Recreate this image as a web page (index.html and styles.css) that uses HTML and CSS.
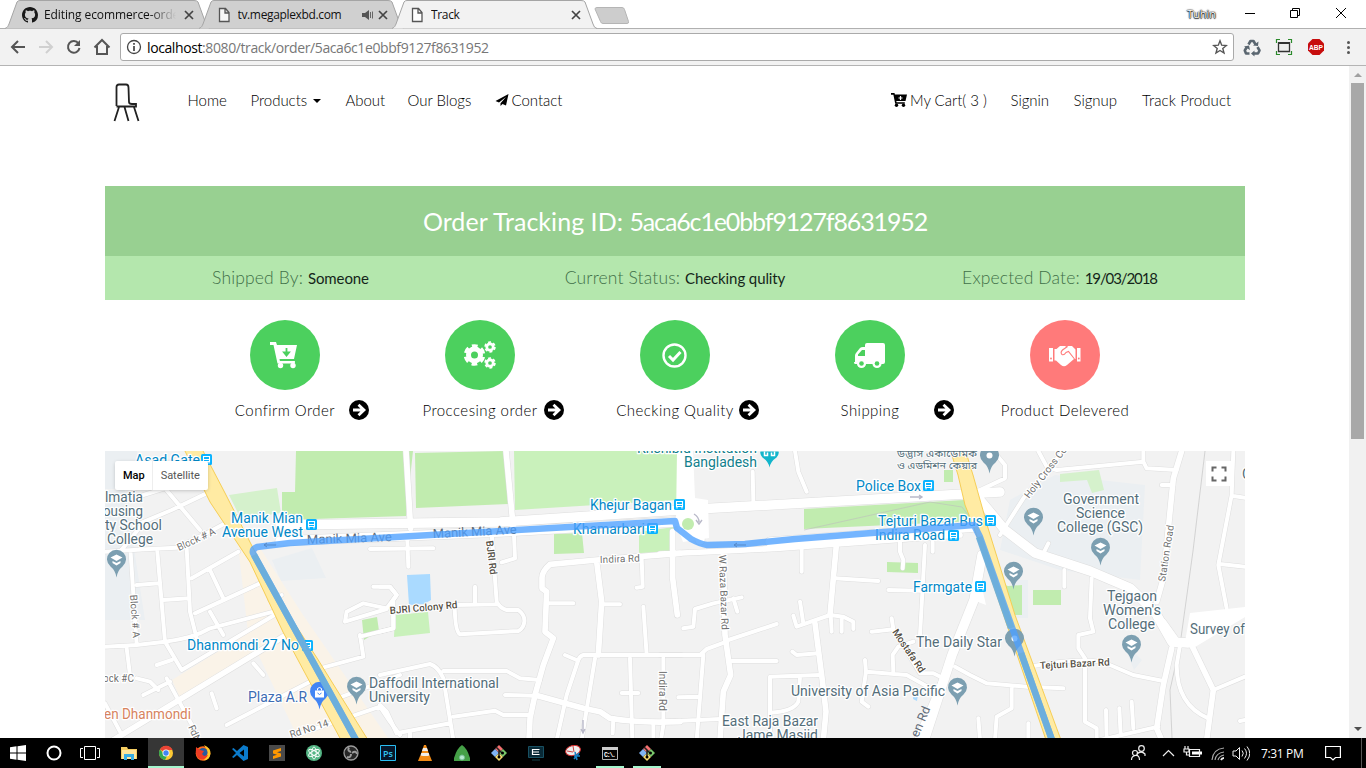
FILE: index.html
```html
<!DOCTYPE html>
<html lang="en">
<head>
<meta charset="utf-8">
<title>Track</title>
<link rel="stylesheet" href="styles.css">
</head>
<body>
<div class="screen">
<div class="tabstrip">
  <div class="tab">
    <svg class="tab-shape" viewBox="0 0 205 29"><path d="M0 28.5C3 27 3 26 4 24L12 2Q13 .5 15 .5H189Q192 .5 193 2L201 24Q202 28 205 28.5"/></svg>
    <svg class="fav" viewBox="0 0 16 16"><path fill="#181818" d="M8 0C3.58 0 0 3.58 0 8c0 3.54 2.29 6.53 5.47 7.59.4.07.55-.17.55-.38 0-.19-.01-.82-.01-1.49-2.01.37-2.53-.49-2.69-.94-.09-.23-.48-.94-.82-1.13-.28-.15-.68-.52-.01-.53.63-.01 1.08.58 1.23.82.72 1.21 1.87.87 2.33.66.07-.52.28-.87.51-1.07-1.78-.2-3.64-.89-3.64-3.95 0-.87.31-1.59.82-2.15-.08-.2-.36-1.02.08-2.12 0 0 .67-.21 2.2.82.64-.18 1.32-.27 2-.27s1.36.09 2 .27c1.53-1.04 2.2-.82 2.2-.82.44 1.1.16 1.92.08 2.12.51.56.82 1.27.82 2.15 0 3.07-1.87 3.75-3.65 3.95.29.25.54.73.54 1.48 0 1.07-.01 1.93-.01 2.2 0 .21.15.46.55.38A8.01 8.01 0 0 0 16 8c0-4.42-3.58-8-8-8z"/></svg>
    <span class="tab-title fade">Editing ecommerce-orde</span>
    <svg class="close" viewBox="0 0 10 10"><path d="M1 1l8 8M9 1L1 9"/></svg>
  </div>
  <div class="tab">
    <svg class="tab-shape" viewBox="0 0 205 29"><path d="M0 28.5C3 27 3 26 4 24L12 2Q13 .5 15 .5H189Q192 .5 193 2L201 24Q202 28 205 28.5"/></svg>
    <svg class="fav" viewBox="0 0 16 16"><path fill="#f6f6f6" stroke="#555" stroke-width="1.3" d="M3.5 1.5h6l3.500 4v9h-9.500zM9 1.500v4.500h4"/></svg>
    <span class="tab-title">tv.megaplexbd.com</span>
    <svg class="sound" viewBox="0 0 12 12"><path fill="#555" d="M0 4h3l4-3v10L3 8H0z"/><path d="M8.500 3v6M10.500 2.500v7" stroke="#666" fill="none"/></svg>
    <svg class="close" viewBox="0 0 10 10"><path d="M1 1l8 8M9 1L1 9"/></svg>
  </div>
  <div class="tab active">
    <svg class="tab-shape" viewBox="0 0 205 29"><path d="M0 28.5C3 27 3 26 4 24L12 2Q13 .5 15 .5H189Q192 .5 193 2L201 24Q202 28 205 28.5"/></svg>
    <svg class="fav" viewBox="0 0 16 16"><path fill="#fff" stroke="#555" stroke-width="1.3" d="M3.500 1.500h6l3.500 4v9h-9.500zM9 1.500v4.500h4"/></svg>
    <span class="tab-title">Track</span>
    <svg class="close" viewBox="0 0 10 10"><path d="M1 1l8 8M9 1L1 9"/></svg>
  </div>
  <svg class="newtab" viewBox="0 0 36 18"><path d="M3 .5h25q2 0 2.500 2l4 12q.5 2-1.500 2H9q-2 0-2.500-2L1 2Q1 .5 3 .5z" fill="#cdcdcd" stroke="#b5b5b5"/></svg>
  <span class="user">Tuhin</span>
  <svg class="winctl" viewBox="0 0 112 14" fill="none" stroke="#000"><path d="M2 7.500h10M47.500 4.500h7v7h-7zM49.500 4.500v-2h7v7h-2M93 2l10 10M103 2L93 12"/></svg>
</div>
<div class="toolbar">
  <svg class="navicons" viewBox="0 0 120 38" fill="none" stroke="#555" stroke-width="2"><path d="M25 19H12M18 13l-6 6 6 6"/><path stroke="#d0d0d0" d="M39 19h13M46 13l6 6-6 6"/><path d="M78.500 15.500A5.800 5.800 0 1 0 79.500 20"/><path d="M80 12v6h-6z" fill="#555" stroke="none"/><path d="M94.500 19.500L102 12l7.500 7.500M97 18v8h10v-8"/></svg>
  <div class="omnibox">
    <svg class="info" viewBox="0 0 16 16" fill="none" stroke="#444" stroke-width="1.300"><circle cx="8" cy="8" r="6.500"/><path stroke-width="1.700" d="M8 7v5M8 4v1.700"/></svg>
    <span class="url"><b>localhost</b>:8080/track/order/5aca6c1e0bbf9127f8631952</span>
    <svg class="star" viewBox="0 0 16 16"><path fill="none" stroke="#555" stroke-width="1.400" d="M8 1.800l1.700 4.400 4.700.3-3.600 3 1.200 4.500L8 11.500 4 14l1.200-4.500-3.600-3 4.700-.3z"/></svg>
  </div>
  <svg class="exts" viewBox="0 0 126 24">
    <g fill="none" stroke="#5a6670" stroke-width="2.600" stroke-linejoin="round"><path d="M8.500 9.500L10.500 6h3l2 3.500M17.500 12l2 3.500-1.500 3h-4M9.500 18.500H6l-1.200-3 2-3.500"/></g><path d="M13 10.500l5 .5.5-4.500zM14.500 15.500v6l-3.500-3zM4 11.500l5-1 1 4.500z" fill="#5a6670"/>
    <path d="M38.500 8h11v8.500h-11z" fill="#eee" stroke="#333" stroke-width="1.300"/><path d="M38 8h12" stroke="#333" stroke-width="2"/><path d="M36.500 8V4.500H40M48 4.500h3.500V8M51.500 16v3.500H48M40 19.500h-3.500V16" stroke="#2b8a2b" fill="none" stroke-width="1.200"/>
    <path d="M72.500 4h7l4.500 4.500v7L79.500 20h-7L68 15.500v-7z" fill="#c70d0d"/><text x="69" y="15" font-size="7.500" font-weight="700" textLength="14" lengthAdjust="spacingAndGlyphs" fill="#fff" font-family="Liberation Sans">ABP</text>
    <g fill="#555"><circle cx="108.500" cy="7.500" r="1.500"/><circle cx="108.500" cy="12.500" r="1.500"/><circle cx="108.500" cy="17.500" r="1.500"/></g>
  </svg>
</div>
<div class="viewport">
 <main class="page">
  <header class="site-nav">
    <svg class="logo" viewBox="0 0 30 40" fill="none" stroke="#222" stroke-width="1.800"><path d="M4.500 23V4Q4.500 1.500 7 1.500h7Q16.500 1.500 16.500 4.500l.5 14.500q0 2 3 2h4v2.500H4.500M7 24L2.500 38M12.500 24l4 14M22 24l4.500 14"/></svg>
    <nav class="links">
      <a class="l-home">Home</a><a class="l-products">Products<i class="caret"></i></a><a class="l-about">About</a><a class="l-blogs">Our Blogs</a><a class="l-contact"><svg viewBox="0 0 14 14"><path d="M13.500 1L.5 8l3.500 1.500L11 4l-5.500 6.200V13l2-2 3.500 1.500z"/></svg>Contact</a>
    </nav>
    <nav class="links right">
      <a class="l-cart"><svg viewBox="0 0 16 14"><path d="M0 0h3.500l.4 1.500H16L14.500 8H5.300l.3 1.200h8.200v1.600H4.200L2.400 1.700H0z"/><circle cx="5.500" cy="12.300" r="1.700"/><circle cx="12.500" cy="12.300" r="1.700"/><path d="M9.500 3v4M7.500 5h4" stroke="#fff" stroke-width="1.200"/></svg>My Cart( 3 )</a><a class="l-in">Signin</a><a class="l-up">Signup</a><a class="l-track">Track Product</a>
    </nav>
  </header>
  <section class="tracking">
    <h1>Order Tracking ID: <span>5aca6c1e0bbf9127f8631952</span></h1>
    <div class="facts">
      <p>Shipped By: <span>Someone</span></p><p>Current Status: <span>Checking qulity</span></p><p>Expected Date: <span class="date">19/03/2018</span></p>
    </div>
  </section>
  <section class="steps">
    <div class="step"><div class="disc"><svg viewBox="0 0 32 32"><path fill="#fff" d="M1 3h6l1 3h20l-3 14H10.500l.4 2h15v2.500H8.500L4.500 6H1z"/><circle cx="11.500" cy="26.500" r="2.700" fill="#fff"/><circle cx="24" cy="26.500" r="2.700" fill="#fff"/><path d="M17.500 9v5M15 13.500h5l-2.500 3z" stroke="#4cd05e" fill="#4cd05e" stroke-width="1.800"/></svg></div>
      <div class="label"><span>Confirm Order</span><svg class="arrow" viewBox="0 0 20 20"><circle cx="10" cy="10" r="10"/><path d="M4 10h11M9.500 4.800L15 10l-5.500 5.200"/></svg></div></div>
    <div class="step"><div class="disc"><svg viewBox="0 0 32 32" fill="none" stroke="#fff"><circle cx="10.500" cy="16" r="6" stroke-width="5"/><circle cx="10.500" cy="16" r="9.300" stroke-width="3" stroke-dasharray="5.700 4.039" stroke-dashoffset="-2"/><circle cx="26" cy="8" r="3.200" stroke-width="2.700"/><circle cx="26" cy="8" r="4.900" stroke-width="1.700" stroke-dasharray="2.900 2.231"/><circle cx="26" cy="24" r="3.200" stroke-width="2.700"/><circle cx="26" cy="24" r="4.900" stroke-width="1.700" stroke-dasharray="2.900 2.231"/></svg></div>
      <div class="label"><span>Proccesing order</span><svg class="arrow" viewBox="0 0 20 20"><circle cx="10" cy="10" r="10"/><path d="M4 10h11M9.500 4.800L15 10l-5.500 5.200"/></svg></div></div>
    <div class="step"><div class="disc"><svg viewBox="0 0 32 32" fill="none" stroke="#fff"><circle cx="15.500" cy="16.500" r="11" stroke-width="2.400"/><path d="M10 17l4 4 7.500-8" stroke-width="3"/></svg></div>
      <div class="label"><span>Checking Quality</span><svg class="arrow" viewBox="0 0 20 20"><circle cx="10" cy="10" r="10"/><path d="M4 10h11M9.500 4.800L15 10l-5.500 5.200"/></svg></div></div>
    <div class="step"><div class="disc"><svg viewBox="0 0 32 32" fill="#fff"><path fill-rule="evenodd" d="M13 4h16q2 0 2 2v17q0 2-2 2H1q-1 0-1-2h1v-6q0-2 1-3l4-5q1-1 3-1h2V6q0-2 2-2zm-2 7H8l-4 4.500V17h7z"/><circle cx="7.500" cy="24.500" r="4.600"/><circle cx="23" cy="24.500" r="4.600"/><g fill="#4cd05e"><circle cx="7.500" cy="24.500" r="2.300"/><circle cx="23" cy="24.500" r="2.300"/></g></svg></div>
      <div class="label"><span>Shipping</span><svg class="arrow" viewBox="0 0 20 20"><circle cx="10" cy="10" r="10"/><path d="M4 10h11M9.500 4.800L15 10l-5.500 5.200"/></svg></div></div>
    <div class="step"><div class="disc red"><svg viewBox="0 0 32 32"><path fill="#fff" d="M0 9h4v13.500H0zM28 9h3.500v13.500H28zM5.500 10h2l3.500-3h5l1.500 1L19 7h4l3.500 3.500V20H25l-7 6q-3 2.500-6 0L7 21.500H5.500z"/><path d="M18.500 7.500l-5 3.500q-2.500 2.500-.5 4.500 2 1 4-2l2.500-1 6 7.500" fill="none" stroke="#ff7a7a" stroke-width="1.100"/><circle cx="2" cy="19.500" r=".9" fill="#ff7a7a"/><circle cx="29.800" cy="19.500" r=".9" fill="#ff7a7a"/></svg></div>
      <div class="label"><span>Product Delevered</span></div></div>
  </section>
  <section class="map">
   <svg class="canvas" viewBox="105 451 1140 287">
    <defs>
     <g id="minor">
      <g transform="translate(100 445) scale(.33333)"><path d="M15 320L150 312 230 308Q330 262 410 215M130 150L195 130 300 255M120 235L215 195 330 140M130 235L60 320M92 325L110 600M172 320L195 590 245 675M260 310L270 500 290 580M110 420L175 415M190 465L265 460M275 400L415 320M330 375L370 460M285 505L350 475 480 415M330 500L370 570M15 605L110 600 195 590Q280 580 330 550L520 500M245 675L540 500M80 610L90 690M170 660L215 645M110 700L150 710 175 735M15 775L60 860M130 750L210 710M200 700L300 885M460 655L490 690M335 745L350 790M380 840L630 710M660 670L790 635 780 570M700 765L900 690M590 870L840 785 870 830 900 870M820 425L870 425 890 450 860 490 790 475 740 500 735 530 860 492M880 470L880 550 780 575M810 312L1000 310M510 465L545 450"/></g>
      <g transform="translate(380 445) scale(.33333)"><path d="M82 285L85 365M402 270L405 340 365 352M335 265L350 470Q360 490 380 495H415Q435 510 433 530T415 558L240 568Q225 560 224 480L350 478M285 425V478M0 425L30 425 50 450 30 480M40 500L40 550 0 560M0 690L150 657Q175 665 190 700L220 885M190 678L380 678 420 700 480 705M375 750L465 752M220 815L345 797 370 810 450 810M0 780L20 800 50 865 210 835M505 475H580M670 478H720M785 340L788 425 770 428M875 335L880 420 893 510M790 485L800 630M555 630L590 645 M905 630H610Q600 632 595 645L560 750 530 885M645 640L605 885M750 640L757 885M725 744H775M850 640L850 840 843 885M700 820L698 865M820 830V885M90 865V885"/></g>
      <g transform="translate(660 445) scale(.33333)"><path d="M278 80L280 170M405 18L415 80 440 140M425 290V380M525 400L655 408M720 290V320L730 345 728 370M795 300L780 570M685 435L780 437M818 290V320M205 585L350 537M245 457L160 475 105 492 100 545 70 550M220 460L232 500M0 630L120 630 140 612 200 590M130 630L110 885M215 648H350M55 757L115 755M0 830L180 822M400 512L410 545 510 510 550 515 580 530V552M420 470L430 535M545 515V560M512 510L515 560M397 620L410 630 475 625M330 885V695L480 690M420 695L415 770Q400 800 330 803M615 645L618 680 605 770 625 785M620 680L740 690 830 740M700 680L698 630 715 605 760 590M635 560L700 553 695 520M700 553L780 685 820 685 850 700"/></g>
      <g transform="translate(950 445) scale(.33333)"><path d="M80 140L165 100 165 60 140 30M265 18L290 65 320 75 580 50V18M580 50L590 70 680 75M635 120H670M280 325L295 295M343 375V425M425 400L420 520 430 560 385 570 385 610 405 640V830L440 850V885M15 665L60 690 110 715 230 725 340 730M185 730V790L140 815 135 885M235 835V885M85 820L90 885M468 795L470 885M508 790L512 870M545 770L550 850M450 885L625 845M240 665Q420 630 480 660L550 690 640 708M690 600L680 660Q680 780 775 820M850 18L845 150 805 360 830 490M850 153L885 158M810 357L885 365M790 735L885 695M885 825L870 828M340 18L220 160 150 270"/></g>
     </g>
     <g id="major">
      <g transform="translate(100 445) scale(.33333)"><path d="M40 885L550 575"/></g>
      <g transform="translate(380 445) scale(.33333)"><path d="M78 18L92 250M378 18L400 250M900 325L650 345 510 358Q485 380 486 400V430L500 440 495 560 520 580 490 660 465 750 450 820 447 885M650 350L665 470 655 630M465 750L610 790 660 800 690 820Q770 835 900 830"/></g>
      <g transform="translate(660 445) scale(.33333)"><path d="M0 327L200 318 350 310 900 270M38 260L38 400 52 510M530 290L510 510M190 320L195 570 212 690 190 740 180 885M465 535L485 690 498 800 490 885M770 885L900 580"/></g>
      <g transform="translate(950 445) scale(.33333)"><path d="M695 18L670 100 640 400 620 470M640 530L690 600M720 590L790 735 770 885M665 610L640 720 620 850 635 885"/></g>
     </g>
     <g id="wide">
      <path d="M280 525L500 522 680 510 1000 492M280 541L500 532 675 522"/><path d="M685 451V515M700 515V540M770 542L975 527"/><path d="M980 500L1005 530 1035 553 1090 571 1130 588 1155 612 1172 642 1188 643"/><path d="M982 555L974 600 952 655 925 738"/>
     </g>
     <g id="pin"><path d="M0 18Q-1 11-6 7A9.500 9.500 0 1 1 6 7Q1 11 0 18z" fill="#7c9fb1"/></g>
     <g id="school"><use href="#pin"/><path d="M-6-2L0-5 6-2 0 1.500zM-4 1.500L0 3.500 4 1.500V3.500L0 6-4 3.500z" fill="#fff"/></g>
     <g id="bus"><rect x="-5.500" y="-5.500" width="11" height="11" rx="1.500" fill="#0ab3ff"/><path d="M-3-3h6v5h-6zM-3 0h6M-2.500 2v2M2.500 2v2" fill="none" stroke="#fff" stroke-width="1.100"/></g>
    </defs>
    <path fill="#f2f2f2" d="M105 451h1140v287H105z"/>
    <path fill="#ebeff2" d="M105 451h32v38h-32zM105 490h20l20 130h-40zM272 560l40-12 14 30-45 3zM1010 500l45-25 90 10-5 95-80-10-60-20zM1013 580h15v38h-15zM1122 640l20 20-8 10z"/>
    <path fill="#faf3e8" d="M238 545l20 0 45 70 85 123h-90l-50-105zM172 680l100-62 20 20-112 60zM270 565l80 173h-35l-40-90z"/>
    <path fill="#c1ecaf" d="M296 451h117l-7 65-124 4V492h13zM415 453l89-2 4 53-92 4zM554 534l28-1 2 20-30 1zM804 509l160-9 12 21-172 8zM887 562l31 1v10l-31-1zM944 470h9v12h-9zM1008 586l14-1v30h-7l-10-30zM1033 590h28v15h-28zM362 620l15-3 2 14-15 9z"/>
    <path fill="#c9f1bb" d="M514 451h163v49l-162 10zM639 532l35-5-1 25-34 1zM395 615l33-3 2 21-36 4z"/><path fill="#d5f1cc" d="M229 495l48-7 4 25-40 6zM1060 474l39-4 5 20-12 3-5-13-27 2z"/>
    <path fill="#aadaff" d="M407 575l23-1 1 26-7 4-15 1zM914 690l5-2-2 13-4-2z"/>
    <path fill="none" stroke="#bdbdbd" stroke-width=".6" d="M1205 451L1193 551 1180 645 1170 690 1172 738M804 530L930 502 962 507 972 520"/>
    <use href="#minor" class="casing c-minor"/><use href="#major" class="casing c-major"/><use href="#wide" class="casing c-wide"/>
    <use href="#minor" class="road r-minor"/><use href="#major" class="road r-major"/><use href="#wide" class="road r-wide"/>
    <path fill="#fff" d="M677 451h16l2 47 13 2 1 38-26 4-7-20zM978 570l8 35-13-5zM1190 613l55-6v10l-50 30-10-5z"/>
    <g fill="#ffeba3" stroke="#f5c94a" stroke-width=".9"><path d="M184 449L210 502 250 562 283 632 313 688 341 740H368L317 658 287 612 253 548 225 493 202 449z"/><path d="M950 449L958 475 965 505 973 525 1046 740H1061L1015 615 988 528 973 475 965 449z"/></g>
    <circle cx="688" cy="524" r="6" fill="#c1ecaf"/>
    <path d="M694 514q5 3 5 8m-3-2 3 4 3-4M910 497h12m-3-2 3 2-3 2M583 720v12m-2-3 2 4 2-4" fill="none" stroke="#b9b9c9" stroke-width="1.400"/>
    <g transform="translate(.5 .5)">
     <use href="#school" x="116" y="559"/><use href="#school" x="356" y="686"/><use href="#school" x="957" y="687"/><use href="#school" x="1033" y="517"/><use href="#school" x="1100" y="547"/><use href="#school" x="1013" y="571"/><use href="#school" x="1131" y="644"/>
     <use href="#pin" x="989" y="455"/><circle cx="989" cy="455" r="3" fill="#fff"/><use href="#pin" x="1014" y="638"/><circle cx="1014" cy="638" r="3" fill="#fff"/>
     <path d="M769 467q-1-6-7-10-3-4-2-6h18q1 2-2 6-6 4-7 10z" fill="#12b5cb"/><path d="M764 451v4h3v-3m4 0v3h3v-4" stroke="#fff" stroke-width="1.500" fill="none"/>
     <path d="M319 709Q318 702 313 698A9.500 9.500 0 1 1 325 698Q320 702 319 709z" fill="#4285f4"/><path d="M314.500 690h9v7h-9z" fill="#fff"/><path d="M317 690v-2q2-2 4 0v2" fill="none" stroke="#fff"/><path d="M317 692.500q2 3 4 0" fill="none" stroke="#4285f4"/>
     <use href="#bus" x="206" y="459"/><use href="#bus" x="311" y="524"/><use href="#bus" x="307" y="645"/><use href="#bus" x="679" y="504"/><use href="#bus" x="652" y="528"/><use href="#bus" x="928" y="485"/><use href="#bus" x="990" y="520"/><use href="#bus" x="953" y="535"/><use href="#bus" x="980" y="586"/>
    </g>
    <g class="lb blue"><text x="135" y="465" textLength="65" lengthAdjust="spacingAndGlyphs">Asad Gate</text><text x="231" y="523" textLength="72" lengthAdjust="spacingAndGlyphs">Manik Mian</text><text x="222" y="537" textLength="81" lengthAdjust="spacingAndGlyphs">Avenue West</text><text x="187" y="650" textLength="112" lengthAdjust="spacingAndGlyphs">Dhanmondi 27 No</text><text x="590" y="510" textLength="82" lengthAdjust="spacingAndGlyphs">Khejur Bagan</text><text x="573" y="534" textLength="72" lengthAdjust="spacingAndGlyphs">Khamarbari</text><text x="856" y="491" textLength="65" lengthAdjust="spacingAndGlyphs">Police Box</text><text x="878" y="526" textLength="105" lengthAdjust="spacingAndGlyphs">Tejturi Bazar Bus</text><text x="875" y="540" textLength="70" lengthAdjust="spacingAndGlyphs">Indira Road</text><text x="913" y="592" textLength="59" lengthAdjust="spacingAndGlyphs">Farmgate</text></g>
    <g class="lb slate"><text x="105" y="502" textLength="38" lengthAdjust="spacingAndGlyphs">lmatia</text><text x="103" y="516" textLength="40" lengthAdjust="spacingAndGlyphs">ousing</text><text x="105" y="530" textLength="57" lengthAdjust="spacingAndGlyphs">ty School</text><text x="107" y="544" textLength="46" lengthAdjust="spacingAndGlyphs">College</text><text x="369" y="688" textLength="130" lengthAdjust="spacingAndGlyphs">Daffodil International</text><text x="369" y="702" textLength="61" lengthAdjust="spacingAndGlyphs">University</text><text x="791" y="696" textLength="154" lengthAdjust="spacingAndGlyphs">University of Asia Pacific</text><text x="722" y="726" textLength="96" lengthAdjust="spacingAndGlyphs">East Raja Bazar</text><text x="738" y="740" textLength="80" lengthAdjust="spacingAndGlyphs">Jame Masjid</text><text x="916" y="647" textLength="86" lengthAdjust="spacingAndGlyphs">The Daily Star</text><text x="1063" y="504" textLength="76" lengthAdjust="spacingAndGlyphs">Government</text><text x="1076" y="518" textLength="49" lengthAdjust="spacingAndGlyphs">Science</text><text x="1057" y="532" textLength="86" lengthAdjust="spacingAndGlyphs">College (GSC)</text><text x="1107" y="601" textLength="50" lengthAdjust="spacingAndGlyphs">Tejgaon</text><text x="1103" y="615" textLength="58" lengthAdjust="spacingAndGlyphs">Women's</text><text x="1108" y="629" textLength="47" lengthAdjust="spacingAndGlyphs">College</text><text x="1190" y="634" textLength="55" lengthAdjust="spacingAndGlyphs">Survey of</text><text x="1242" y="479">C</text></g>
    <g class="lb slate bn"><text x="897" y="457" textLength="80" lengthAdjust="spacingAndGlyphs">উদ্ভাস একাডেমিক</text><text x="897" y="469" textLength="80" lengthAdjust="spacingAndGlyphs">ও এডমিশন কেয়ার</text></g>
    <g class="lb teal"><text x="637" y="453" textLength="120" lengthAdjust="spacingAndGlyphs">Khshibid Institution</text><text x="684" y="467" textLength="73" lengthAdjust="spacingAndGlyphs">Bangladesh</text></g>
    <text class="lb shop" x="248" y="702" textLength="59" lengthAdjust="spacingAndGlyphs">Plaza A.R</text><text class="lb orange" x="104" y="719" textLength="87" lengthAdjust="spacingAndGlyphs">en Dhanmondi</text>
    <g class="lb rd"><text transform="translate(179 551) rotate(-25)" textLength="41">Block # A</text><text transform="translate(130 595) rotate(86)" textLength="43">Block # A</text><text x="103" y="682" textLength="31">ock #C</text><text transform="translate(188 727) rotate(65)" textLength="18">Rd N</text><text transform="translate(291 738) rotate(-18)" textLength="40">Rd No 14</text><text class="big" transform="translate(307 544) rotate(-2)" textLength="85" lengthAdjust="spacingAndGlyphs">Manik Mia Ave</text><text class="big" transform="translate(433 538) rotate(-3)" textLength="84" lengthAdjust="spacingAndGlyphs">Manik Mia Ave</text><text x="600" y="563" textLength="40" transform="rotate(-2 600 563)">Indira Rd</text><text transform="translate(659 671) rotate(90)" textLength="40">Indira Rd</text><text transform="translate(719 555) rotate(88)" textLength="75">W Raza Bazar Rd</text><text transform="translate(1029 499) rotate(-52)" textLength="65">Holy Cross Col</text><text transform="translate(1165 582) rotate(-81)" textLength="57">Station Road</text><text class="big" transform="translate(918 738) rotate(-67)" textLength="32">en Rd</text></g>
    <g class="lb rd dark"><text transform="translate(486 541) rotate(83)" textLength="34">BJRI Rd</text><text transform="translate(390 614) rotate(-5)" textLength="68">BJRI Colony Rd</text><text transform="translate(892 632) rotate(56)" textLength="50">Mostafa Rd</text><text transform="translate(1040 669) rotate(-3)" textLength="70">Tejturi Bazar Rd</text></g>
    <path class="route" d="M356 740L253 553Q252 549 257 547L290 543 675 521 677 528 691 539Q700 544 707 545L745 544 795 539 974 525 980 537 1052 740"/>
    <path class="route over-highway" d="M356 740L254 555M979 537L1011 628M1021 653L1052 740"/>
    <path d="M276 545h-12m3-2-3 2 3 2M746 545h-12m3-2-3 2 3 2" stroke="#5589c9" fill="none"/>
   </svg>
   <div class="map-type"><span class="on">Map</span><span>Satellite</span></div>
   <div class="full"><svg viewBox="0 0 16 16"><path d="M1.500 5.500v-4h4M10.500 1.500h4v4M14.500 10.500v4h-4M5.500 14.500h-4v-4" fill="none" stroke="#666" stroke-width="2"/></svg></div>
  </section>
 </main>
 <div class="scrollbar"><i class="up"></i><div class="thumb"></div><i class="down"></i></div>
</div>
<footer class="taskbar">
  <div class="sys"><svg viewBox="0 0 16 16" fill="#fff"><path d="M0 2.200L6.500 1.300v6.200H0zM7.500 1.200L16 0v7.500H7.500zM0 8.500h6.500v6.200L0 13.800zM7.500 8.500H16V16l-8.500-1.200z"/></svg></div>
  <div class="sys"><svg viewBox="0 0 16 16"><circle cx="8" cy="8" r="6.500" fill="none" stroke="#fff" stroke-width="2"/></svg></div>
  <div class="sys"><svg class="tv" viewBox="0 0 20 16" fill="none" stroke="#fff"><path d="M4.500 1.500h11v13h-11zM3 3.500H.5v9H3M17 3.500h2.500v9H17"/></svg></div>
  <div class="app"><svg viewBox="0 0 16 16"><path d="M0 2h6l1 2h9v10H0z" fill="#f5ce62"/><path d="M1 5h14v9H1z" fill="#ffe69b"/><path d="M3 15V9h10v6h-3v-3H6v3z" fill="#38aee4"/></svg></div>
  <div class="app current"><svg viewBox="0 0 16 16"><circle cx="8" cy="8" r="7" fill="#fcc934"/><path d="M8 8L2 4.400A7 7 0 0 1 14.500 5H8z" fill="#ea4335"/><path d="M2 4.400A7 7 0 0 0 7 15l3-6H6z" fill="#34a853"/><circle cx="8" cy="8" r="3.500" fill="#fff"/><circle cx="8" cy="8" r="2.700" fill="#4285f4"/></svg></div>
  <div class="app"><svg viewBox="0 0 16 16"><circle cx="8" cy="8.500" r="7.300" fill="#ff6a1c"/><path d="M9 0q7 3 6.500 9-1 6-7 6.500Q14 11 12 5z" fill="#ffc928"/><circle cx="8" cy="7.500" r="4.500" fill="#285b9e"/><path d="M1 2l4 3 4 1-2 3 2 2 4-1q-2 5-8 4Q0 12 1 2z" fill="#ee3d24"/></svg></div>
  <div class="app"><svg viewBox="0 0 16 16"><path d="M11.500 0L16 2v12l-4.500 2L5 10l-3.500 3L0 12l4-4-4-4 1.500-1L5 6zM12 4.500L7.500 8l4.500 3.500z" fill="#0b7bcc" fill-rule="evenodd"/></svg></div>
  <div class="app"><svg viewBox="0 0 16 16"><path d="M0 0h16v16H0z" fill="#4a4a4a"/><path d="M12 3v3L8 7.300l4 1.200v3L4 14v-3l4-1.300-4-1.200v-3z" fill="#ff9800"/></svg></div>
  <div class="app"><svg viewBox="0 0 16 16"><circle cx="8" cy="8" r="8" fill="#55b685"/><g fill="none" stroke="#fff" stroke-width=".9"><ellipse cx="8" cy="8" rx="2.200" ry="6"/><ellipse cx="8" cy="8" rx="2.200" ry="6" transform="rotate(60 8 8)"/><ellipse cx="8" cy="8" rx="2.200" ry="6" transform="rotate(120 8 8)"/></g></svg></div>
  <div class="app"><svg viewBox="0 0 16 16" fill="none" stroke="#9b9b9b"><circle cx="8" cy="8" r="7" fill="#272727" stroke-width="1.300"/><path d="M8 7Q4 6 6 2.500M9 8q4-3 5 1M8 9q0 4-4 3" stroke-width="2"/></svg></div>
  <div class="app"><svg viewBox="0 0 16 16"><path d="M.5.5h15v15H.5z" fill="#06172b" stroke="#29bdf2"/><text x="3" y="11.500" font-family="Open Sans" font-size="9" font-weight="600" fill="#31c5f4" textLength="10">Ps</text></svg></div>
  <div class="app"><svg viewBox="0 0 16 16"><path d="M3 11h10l2 5H1z" fill="#f08a16"/><path d="M7 0h2l4 12q-5 2-10 0z" fill="#f28c18"/><path d="M6 3h4l1 3H5zM4.300 8h7.400l.8 2.500q-4 1-9 0z" fill="#eee"/></svg></div>
  <div class="app"><svg viewBox="0 0 16 16"><path d="M8 0q5 3 8 13v3H0v-3Q3 3 8 0z" fill="#45a047"/><circle cx="8" cy="12.500" r="2.500" fill="#b8e9d0" stroke="#77bd96"/></svg></div>
  <div class="app"><svg viewBox="0 0 16 16"><path d="M8 0l4 4-4 4-4-4z" fill="#f57070"/><path d="M4 4l4 4-4 4-4-4z" fill="#80b4f4"/><path d="M12 4l4 4-4 4-4-4z" fill="#79c76b"/><path d="M8 8l4 4-4 4-4-4z" fill="#fade72"/><path d="M5 2l6 6M8 5v7" stroke="#222" stroke-width="1.500"/><circle cx="8" cy="12" r="1.500"/><circle cx="11.500" cy="8" r="1.500"/></svg></div>
  <div class="app"><svg viewBox="0 0 16 16" fill="none"><path d="M.5 1.500h15v11H.5z" fill="#092936" stroke="#185062"/><path d="M11.500 4.500h-7v5h7M4.500 7H11" stroke="#fff" stroke-width="1.200"/><path d="M4 15h8" stroke="#123e46"/></svg></div>
  <div class="app"><svg viewBox="0 0 16 16"><ellipse cx="8" cy="5.500" rx="7.500" ry="5" transform="rotate(-15 8 5.500)" fill="#eee" stroke="#d32e2e"/><path d="M8 1l1 6M2 6l6 1" stroke="#c44"/><path d="M10 7l2 8M14 8l-5 6M9 11h6" stroke="#1682c5" stroke-width="1.500"/></svg></div>
  <div class="app open"><svg viewBox="0 0 16 16"><path d="M.5 2.500h15v12H.5z" fill="#050505" stroke="#b3b3b3"/><path d="M0 2h16v3H0z" fill="#ccc"/><text x="2" y="12" font-family="Liberation Mono" font-size="6.500" font-weight="700" fill="#fff" textLength="12">C:\.</text></svg></div>
  <div class="app open"><svg viewBox="0 0 16 16"><path d="M8 0l4 4-4 4-4-4z" fill="#f57070"/><path d="M4 4l4 4-4 4-4-4z" fill="#80b4f4"/><path d="M12 4l4 4-4 4-4-4z" fill="#79c76b"/><path d="M8 8l4 4-4 4-4-4z" fill="#fade72"/><path d="M5 2l6 6M8 5v7" stroke="#222" stroke-width="1.500"/><circle cx="8" cy="12" r="1.500"/><circle cx="11.500" cy="8" r="1.500"/></svg></div>
  <svg class="tray" viewBox="0 0 124 24" fill="none" stroke="#eee" stroke-width="1.200"><circle cx="15.500" cy="7.500" r="2.800"/><path d="M11 13q4-4 8 0v2M5.500 19q0-4 4-4.500t4 4.500"/><circle cx="9" cy="12" r="2.500"/><path d="M37 15l5.500-5.500L48 15"/><path d="M63.500 8.500h10v7h-10z"/><path d="M66 10.500h7v3h-7zM74 10.500h2v3h-2z" fill="#fff" stroke="none"/><path d="M59 5v3M62 5v3M58 8h5v3h-5zM60.500 11v3h3"/><path d="M86 19Q87 8 98 7M89 19Q90 12 98 11M92 19q1-4 6-5" stroke="#aaa"/><path d="M95 19q1-2 3-2" stroke-width="2"/><path d="M107 10h3l3.500-3.500v12L110 15h-3zM116 9.500q2.500 2.500 0 6M118.500 7.500q4 4.500 0 10M121 5.500q5.500 7 0 14" stroke-width="1"/></svg>
  <span class="clock">7:31 PM</span>
  <svg class="note" viewBox="0 0 16 16" fill="none" stroke="#fff" stroke-width="1.200"><path d="M.6 1.500h14.800v11H10.500L8 15l-2.500-2.500H.6z"/></svg>
  <i class="peek"></i>
</footer>
</div>
</body>
</html>
```
FILE: styles.css
```css
* { box-sizing: border-box; }
body { margin: 0; background: #fff; font-family: Lato, "Open Sans", sans-serif; }
.screen { width: 1366px; height: 768px; display: flex; flex-direction: column; overflow: hidden; }
svg { display: block; flex: none; }

.tabstrip { height: 28px; display: flex; flex: none; padding-left: 5px; font: 12px "Open Sans", sans-serif; }
.tab { position: relative; width: 205px; height: 29px; margin-right: -11.500px; padding: 0 16px 0 17px; display: flex; align-items: center; flex: none; }
.tab > * { position: relative; }
.tab .tab-shape { position: absolute; left: 0; top: 0; width: 205px; height: 29px; fill: #d0d0d0; stroke: #a5a5a5; }
.tab.active { z-index: 2; }
.tab.active .tab-shape { fill: #f2f2f2; }
.fav { width: 16px; height: 16px; margin-right: 6px; }
.tab-title { flex: 1; white-space: nowrap; overflow: hidden; letter-spacing: -.35px; color: #111; }
.fade { letter-spacing: -.1px; -webkit-mask-image: linear-gradient(90deg, #000 80%, transparent); mask-image: linear-gradient(90deg, #000 80%, transparent); }
.close { width: 10px; height: 10px; margin-left: 8px; stroke: #444; stroke-width: 1.700; }
.sound { width: 12px; height: 12px; margin-right: -4px; }
.newtab { width: 36px; height: 18px; margin: 7px 0 0 8px; }
.user { margin-left: auto; margin-top: 6px; width: 28px; font-size: 11px; line-height: 15px; color: #fff; text-shadow: 0 0 1px #000, 0 0 1px #000, 0 1px 1px #333, 0 0 2px #555; }
.winctl { width: 112px; height: 14px; margin: 6px 11px 0 28px; }

.toolbar { height: 38px; flex: none; display: flex; align-items: center; background: #f2f2f2; border-top: 1px solid #b0b0b0; border-bottom: 1px solid #b4b4b4; }
.navicons { width: 120px; height: 38px; }
.omnibox { width: 1114px; height: 28px; border: 1px solid #aaa; border-radius: 3px; background: #fff; display: flex; align-items: center; padding: 0 5px; }
.info { width: 16px; height: 16px; margin-right: 5px; }
.url { flex: 1; font: 14px "Open Sans", sans-serif; letter-spacing: -.4px; color: #777; }
.url b { font-weight: 400; color: #000; }
.star { width: 16px; height: 16px; }
.exts { width: 126px; height: 24px; margin-left: 6px; }

.viewport { flex: 1; min-height: 0; display: flex; overflow: hidden; }
.page { width: 1350px; padding: 0 105px; flex: none; overflow: hidden; }
.site-nav { height: 70px; display: flex; align-items: center; padding-left: 7px; padding-right: 13px; }
.logo { width: 30px; height: 40px; margin-top: 3px; }
.links { display: flex; margin: -2px 0 0 45.500px; font-size: 15px; font-weight: 300; letter-spacing: -.03px; color: #000; }
.links.right { margin-left: auto; }
.links a { display: flex; align-items: center; white-space: nowrap; }
.l-home { width: 63px; } .l-products { width: 95px; } .l-about { width: 62px; } .l-blogs { width: 87px; } .l-contact { width: 80px; }
.l-cart { width: 119.500px; } .l-in { width: 63px; } .l-up { width: 68.500px; } .l-track { width: 90px; letter-spacing: .1px; }
.caret { border: 4px solid transparent; border-top-color: #000; border-bottom: 0; margin: 2px 0 0 6px; }
.l-contact svg { width: 14px; height: 14px; margin-right: 3px; }
.l-cart svg { width: 16px; height: 14px; margin-right: 3px; }

.tracking { margin-top: 50px; text-align: center; }
.tracking h1 { margin: 0; height: 70px; line-height: 70px; background: #98d091; color: #fff; font-size: 25px; font-weight: 400; letter-spacing: .04px; }
.tracking h1 span { letter-spacing: -1.13px; }
.facts { height: 44px; display: grid; grid-template-columns: 371px 398px 371px; background: #b4e7ad; }
.facts p { margin: 0; line-height: 44px; font-size: 17.500px; font-weight: 300; letter-spacing: .15px; color: #3f7048; }
.facts span { font-size: 15px; font-weight: 400; letter-spacing: -.1px; color: #14251a; }
.facts .date { letter-spacing: -1.1px; }

.steps { height: 151px; padding: 20px 82.500px 0; display: grid; grid-template-columns: repeat(5, 195px); }
.disc { width: 70px; height: 70px; margin: 0 auto; border-radius: 50%; background: #4cd05e; display: grid; place-items: center; }
.disc.red { background: #ff7a7a; }
.disc svg { width: 32px; height: 32px; }
.label { margin-top: 10px; height: 22px; display: grid; grid-template-columns: 1fr 127px 1fr; align-items: center; font-size: 15px; font-weight: 300; letter-spacing: .45px; color: #000; }
.label span { grid-column: 2; text-align: center; white-space: nowrap; margin: -2px -2px 0; }
.arrow { width: 20px; height: 20px; margin-top: -2px; }
.arrow path { fill: none; stroke: #fff; stroke-width: 2.800; }

.map { position: relative; height: 287px; overflow: hidden; }
.canvas { width: 1140px; height: 287px; }
.casing, .road { fill: none; stroke-linecap: round; stroke-linejoin: round; }
.casing { stroke: #dedede; } .road { stroke: #fff; }
.c-minor { stroke-width: 15px; } .r-minor { stroke-width: 12px; }
.c-major { stroke-width: 20px; } .r-major { stroke-width: 17px; }
.c-wide { stroke-width: 10.500px; } .r-wide { stroke-width: 9.500px; }
.route { fill: none; stroke: #4da0ff; stroke-opacity: .78; stroke-width: 6.500; stroke-linejoin: round; }
.over-highway { stroke: #6caedb; stroke-opacity: .95; }
.lb { font-family: Roboto, sans-serif; font-size: 14.200px; paint-order: stroke; stroke: #fff; stroke-width: 2.500px; stroke-linejoin: round; }
.blue { fill: #0288c7; } .slate { fill: #546e7a; } .teal { fill: #12808c; } .shop { fill: #3c6cb4; } .orange { fill: #d7835e; }
.bn { font-size: 10px; stroke-width: 1.500px; font-family: "Noto Sans Bengali", "Noto Sans", sans-serif; }
.rd { font-size: 10px; fill: #6f6f6f; } .rd.dark { fill: #555046; font-weight: 500; stroke-width: 2px; }
.big { font-size: 12.500px; fill: #5f6b78; stroke-width: 1px; stroke-opacity: .3; }
.map-type { position: absolute; left: 10px; top: 10px; height: 29px; display: flex; background: #fff; border-radius: 2px; box-shadow: 0 1px 4px -1px rgba(0,0,0,.3); font: 11px/29px Roboto, sans-serif; letter-spacing: -.03px; color: #565656; }
.map-type span { padding: 0 8px; }
.map-type .on { color: #000; font-weight: 500; border-right: 1px solid #eee; padding-right: 7px; }
.full { position: absolute; right: 14px; top: 10px; width: 25px; height: 25px; background: #fff; display: grid; place-items: center; }
.full svg { width: 16px; height: 16px; }

.scrollbar { width: 17px; margin-left: -1px; flex: none; background: #f1f1f1; display: flex; flex-direction: column; align-items: center; }
.scrollbar .up { border: 4px solid transparent; border-bottom-color: #a0a0a0; border-top: 0; margin: 7px 0 6px; }
.thumb { width: 13px; height: 356px; background: #a8a8a8; }
.scrollbar .down { border: 4px solid transparent; border-top-color: #505050; border-bottom: 0; margin: auto 0 7px; }

.taskbar { height: 30px; flex: none; background: #000; display: flex; align-items: center; }
.sys, .app { height: 30px; display: grid; place-items: center; flex: none; }
.sys { width: 36px; } .app { width: 37px; }
.sys + .app { margin-left: 2px; }
.sys svg, .app svg { width: 16px; height: 16px; }
.sys .tv { width: 20px; }
.current { background: #363636; border-bottom: 2px solid #a5f5cd; padding-top: 2px; width: 36px; margin-left: 1px; }
.open { background: linear-gradient(#a5f5cd, #a5f5cd) center bottom / 28px 2px no-repeat; }
.tray { width: 124px; height: 24px; margin-left: auto; }
.clock { width: 64px; margin-left: 11px; font: 12px "Open Sans", sans-serif; letter-spacing: -.35px; color: #fff; white-space: nowrap; }
.note { width: 16px; height: 16px; }
.peek { width: 1px; height: 30px; margin: 0 4px 0 20px; background: #555; }
```
